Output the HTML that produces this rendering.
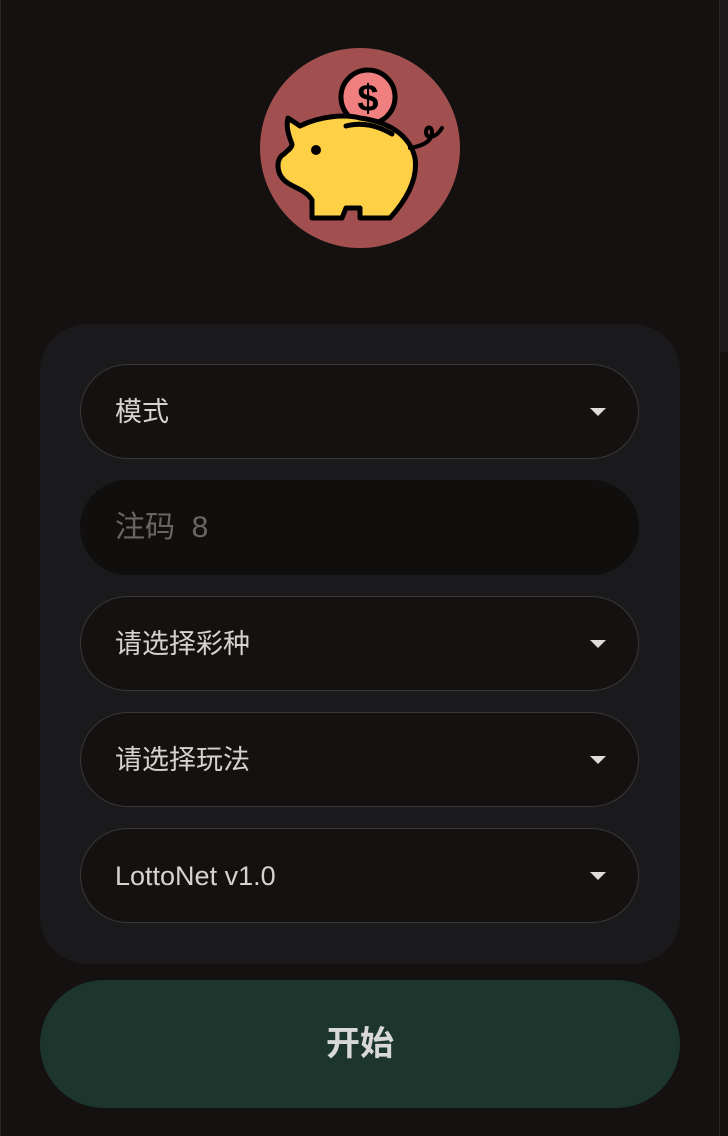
<!DOCTYPE html>
<html><head><meta charset="utf-8"><style>
*{box-sizing:border-box;margin:0;padding:0}
html,body{width:728px;height:1136px;overflow:hidden;background:#141110;font-family:"Liberation Sans","Noto Sans CJK SC",sans-serif}
.sb{position:absolute;left:719px;top:0;width:9px;height:1136px;background:#141110;border-left:1px solid #2a2727}
.sb div{height:352px;background:#1c1a1a}
.lb{position:absolute;left:0;top:0;width:1px;height:1136px;background:#2a2727}
.logo{position:absolute;left:260px;top:48px;width:200px;height:200px;border-radius:50%;background:#a14f4f}
.panel{position:absolute;left:40px;top:324px;width:640px;height:640px;border-radius:48px;background:#1a1a1c}
.f{position:absolute;left:80px;width:559px;height:95px;border-radius:48px;background:#141110;border:1.5px solid #3b3737;color:#d6d2d0;font-size:27px;line-height:95px;padding-left:34px}
.f.n{border:none;background:#110f0e;color:#6a6665;font-size:30px;padding-left:35px}
.arr{position:absolute;right:32px;top:43px;width:0;height:0;border-left:8px solid transparent;border-right:8px solid transparent;border-top:8px solid #e0dcdb}
.btn{position:absolute;left:40px;top:980px;width:640px;height:128px;border-radius:64px;background:#1c362d;color:#d8d8d8;font-size:34px;font-weight:bold;text-align:center;line-height:128px}
</style></head><body>
<div class="lb"></div>
<div class="sb"><div></div></div>
<div class="logo">
<svg width="200" height="200" viewBox="0 0 200 200">
<circle cx="108" cy="49" r="27" fill="#f08080" stroke="#000" stroke-width="5"/>
<text x="108" y="63" text-anchor="middle" font-family="Liberation Sans" font-weight="bold" font-size="38" fill="#000">$</text>
<path d="M28 70 L40 78 C60 68 85 66 100 70 C130 74 150 88 155 110 C158 130 148 150 130 170 L100 170 L100 160 L86 160 L82 170 L52 170 L52 152 C44 140 32 140 24 132 C16 124 16 110 24 106 C28 102 32 100 32 96 C28 86 26 78 28 70 Z" fill="#fdd046" stroke="#000" stroke-width="5" stroke-linejoin="round"/>
<path d="M86 78 Q108 72 132 86" fill="none" stroke="#000" stroke-width="5" stroke-linecap="round"/>
<path d="M150 100 C162 98 172 94 172 84 C172 78 166 78 166 84 C166 92 176 90 182 80" fill="none" stroke="#000" stroke-width="4" stroke-linecap="round"/>
<circle cx="56" cy="102" r="5" fill="#000"/>
</svg>
</div>
<div class="panel"></div>
<div class="f" style="top:364px">模式<span class="arr"></span></div>
<div class="f n" style="top:480px">注码&nbsp;&nbsp;8</div>
<div class="f" style="top:596px">请选择彩种<span class="arr"></span></div>
<div class="f" style="top:712px">请选择玩法<span class="arr"></span></div>
<div class="f" style="top:828px">LottoNet v1.0<span class="arr"></span></div>
<div class="btn">开始</div>
</body></html>
